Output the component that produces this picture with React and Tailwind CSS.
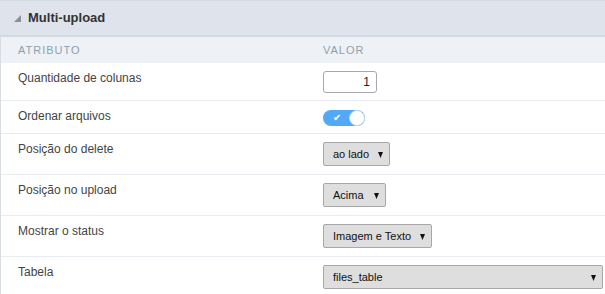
import React from "react";

function Select({ label, width }) {
  return (
    <div
      className="flex items-center justify-between whitespace-nowrap h-[24px] rounded-[2px] border border-[#a8a8a8] bg-[#dedede] pl-[9px] pr-[6px] text-[11px] text-[#111]"
      style={{ width }}
    >
      <span>{label}</span>
      <svg width="5" height="6" viewBox="0 0 5 6" className="mt-[1px]">
        <polygon points="0,0 5,0 2.5,6" fill="#111" />
      </svg>
    </div>
  );
}

function Row({ label, height, children, last }) {
  return (
    <div
      className={`flex ${last ? "" : "border-b border-[#e8ecf0]"}`}
      style={{ height }}
    >
      <div className="w-[304px] pl-[17px] pt-[8px] text-[12px] leading-[14px] text-[#444]">
        {label}
      </div>
      <div className="flex-1 pl-[18px] pt-[8px]">{children}</div>
    </div>
  );
}

export default function App() {
  return (
    <div className="w-[605px] h-[294px] overflow-hidden bg-white font-['Liberation_Sans',Arial,sans-serif]">
      <div className="h-[37px] bg-[#dfe3ec] border-t border-[#d3dbe2] border-b-2 border-b-[#d3dbe2] flex items-center pl-[14px]">
        <svg width="8" height="8" viewBox="0 0 8 8" className="mr-[6px] mt-[1px]">
          <polygon points="7,0 7,7 0,7" fill="#8b8f96" />
        </svg>
        <span className="text-[13px] font-bold text-[#333]">Multi-upload</span>
      </div>
      <div className="border-l border-[#d7dde3]">
        <div className="flex h-[26px] items-center bg-[#eef2f6] text-[11px] tracking-[1px] text-[#8fa0ab]">
          <div className="w-[304px] pl-[17px]">ATRIBUTO</div>
          <div className="pl-[18px]">VALOR</div>
        </div>
        <Row label="Quantidade de colunas" height={38}>
          <div className="w-[54px] h-[22px] rounded-[3px] border border-[#a5a9ad] bg-white text-right pr-[6px] text-[12px] leading-[20px] text-[#222]">
            1
          </div>
        </Row>
        <Row label="Ordenar arquivos" height={33}>
          <div className="relative w-[42px] h-[16px] rounded-full bg-[#52a9f7] mt-[1px]">
            <span className="absolute left-[10px] top-[1px] text-[10px] leading-[14px] text-white">✔</span>
            <div className="absolute right-0 top-0 w-[16px] h-[16px] rounded-full bg-white border border-[#c9d6e0]" />
          </div>
        </Row>
        <Row label="Posição do delete" height={41}>
          <Select label="ao lado" width={67} />
        </Row>
        <Row label="Posição no upload" height={41}>
          <Select label="Acima" width={63} />
        </Row>
        <Row label="Mostrar o status" height={41}>
          <Select label="Imagem e Texto" width={109} />
        </Row>
        <Row label="Tabela" height={40} last>
          <Select label="files_table" width={280} />
        </Row>
      </div>
    </div>
  );
}
